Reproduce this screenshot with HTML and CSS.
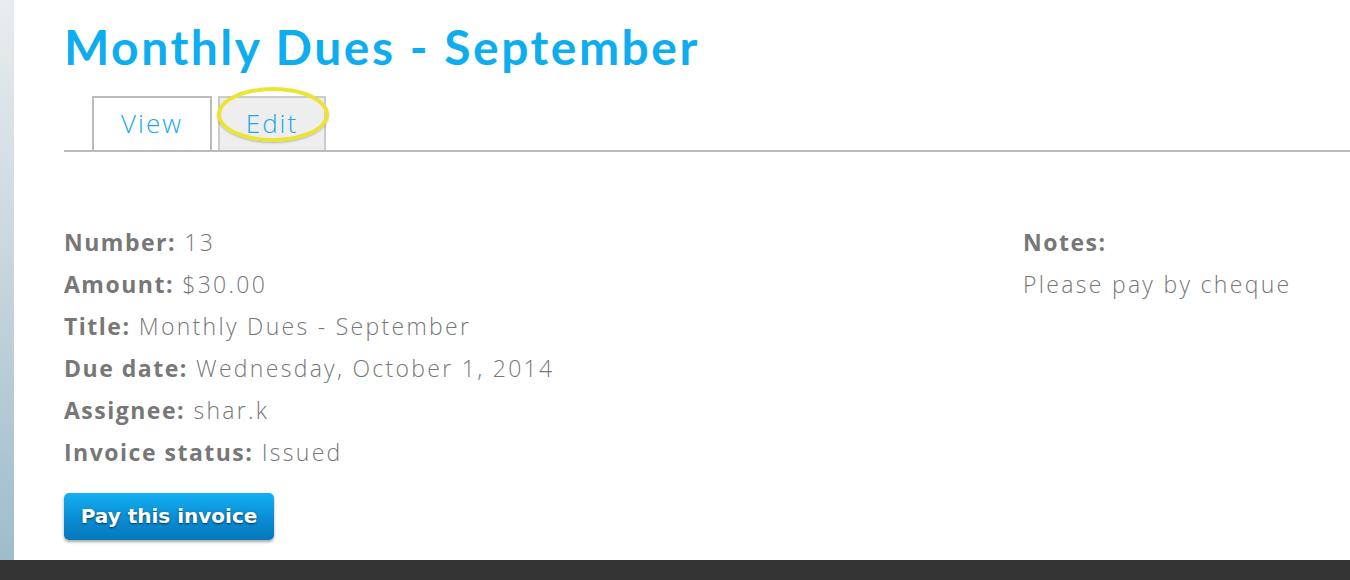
FILE: index.html
```html
<!DOCTYPE html>
<html lang="en">
  <head>
    <meta charset="UTF-8" />
    <meta name="viewport" content="width=device-width, initial-scale=1.0" />
    <title>Monthly Dues - September</title>
    <link rel="stylesheet" href="styles.css">
  </head>
  <body>
    <div class="page">
      <aside class="sidebar"></aside>

      <main class="content">
        <h1 class="title">Monthly Dues - September</h1>

        <ul class="tabs">
          <li class="tab active"><a href="#">View</a></li>
          <li class="tab tab-edit">
            <a href="#">Edit</a>
            <span class="highlight"></span>
          </li>
        </ul>

        <div class="invoice">
          <div class="fields">
            <div class="field"><span class="label">Number:</span> 13</div>
            <div class="field"><span class="label">Amount:</span> $30.00</div>
            <div class="field"><span class="label">Title:</span> Monthly Dues - September</div>
            <div class="field"><span class="label">Due date:</span> Wednesday, October 1, 2014</div>
            <div class="field"><span class="label">Assignee:</span> shar.k</div>
            <div class="field"><span class="label">Invoice status:</span> Issued</div>
          </div>

          <div class="notes">
            <div class="field label">Notes:</div>
            <div class="field">Please pay by cheque</div>
          </div>
        </div>

        <a class="pay-button" href="#">Pay this invoice</a>
      </main>
    </div>

    <footer class="footer"></footer>
  </body>
</html>
```

FILE: styles.css
```css
body {
  margin: 0;
  padding: 0;
  font-family: "Open Sans", Lato, sans-serif;
  background-color: #ffffff;
  overflow: hidden;
}

.page {
  display: flex;
  height: 560px;
}

.sidebar {
  width: 14px;
  flex-shrink: 0;
  background: linear-gradient(to bottom, #e9edef 0%, #c9d7df 45%, #9fbccb 100%);
}

.content {
  flex: 1;
  padding-left: 50px;
}

.title {
  margin: 18px 0 0;
  font-family: Lato, "Open Sans", sans-serif;
  font-size: 48px;
  font-weight: bold;
  line-height: 58px;
  letter-spacing: 2.5px;
  color: #0eadf0;
}

.tabs {
  list-style: none;
  margin: 20px 0 0;
  padding: 0 0 0 28px;
  display: flex;
  gap: 6px;
  border-bottom: 2px solid #bbbbbb;
}

.tab {
  position: relative;
  width: 120px;
  height: 54px;
  border: 2px solid #bbbbbb;
  border-bottom: none;
  background-color: #eeeeee;
  box-sizing: border-box;
}

.tab.active {
  background-color: #ffffff;
}

.tab-edit {
  width: 108px;
  border-color: #cccccc;
}

.tab a {
  display: block;
  text-align: center;
  line-height: 50px;
  font-size: 26px;
  font-weight: 300;
  letter-spacing: 2px;
  color: #1aa9ea;
  text-decoration: none;
}

.highlight {
  position: absolute;
  left: -3px;
  top: -11px;
  width: 104px;
  height: 47px;
  border: 4px solid #ece432;
  border-radius: 50%;
  box-shadow: 0 1px 2px rgba(0, 0, 0, 0.25);
}

.invoice {
  display: grid;
  grid-template-columns: 959px auto;
  margin-top: 69px;
}

.field {
  font-size: 23px;
  line-height: 42px;
  letter-spacing: 2.3px;
  color: #777777;
  font-weight: 300;
}

.label {
  font-weight: bold;
  letter-spacing: 1.5px;
}

.pay-button {
  display: inline-block;
  margin-top: 20px;
  width: 210px;
  height: 47px;
  line-height: 47px;
  text-align: center;
  font-family: "DejaVu Sans", sans-serif;
  font-size: 20px;
  font-weight: bold;
  color: #ffffff;
  text-decoration: none;
  border-radius: 5px;
  background: linear-gradient(to bottom, #14b0f1 0%, #0a8fd6 50%, #0578bc 100%);
  box-shadow: 0 2px 3px rgba(0, 0, 0, 0.35);
  text-shadow: 0 1px 2px rgba(0, 0, 0, 0.6);
}

.footer {
  height: 20px;
  background-color: #333333;
}
```
